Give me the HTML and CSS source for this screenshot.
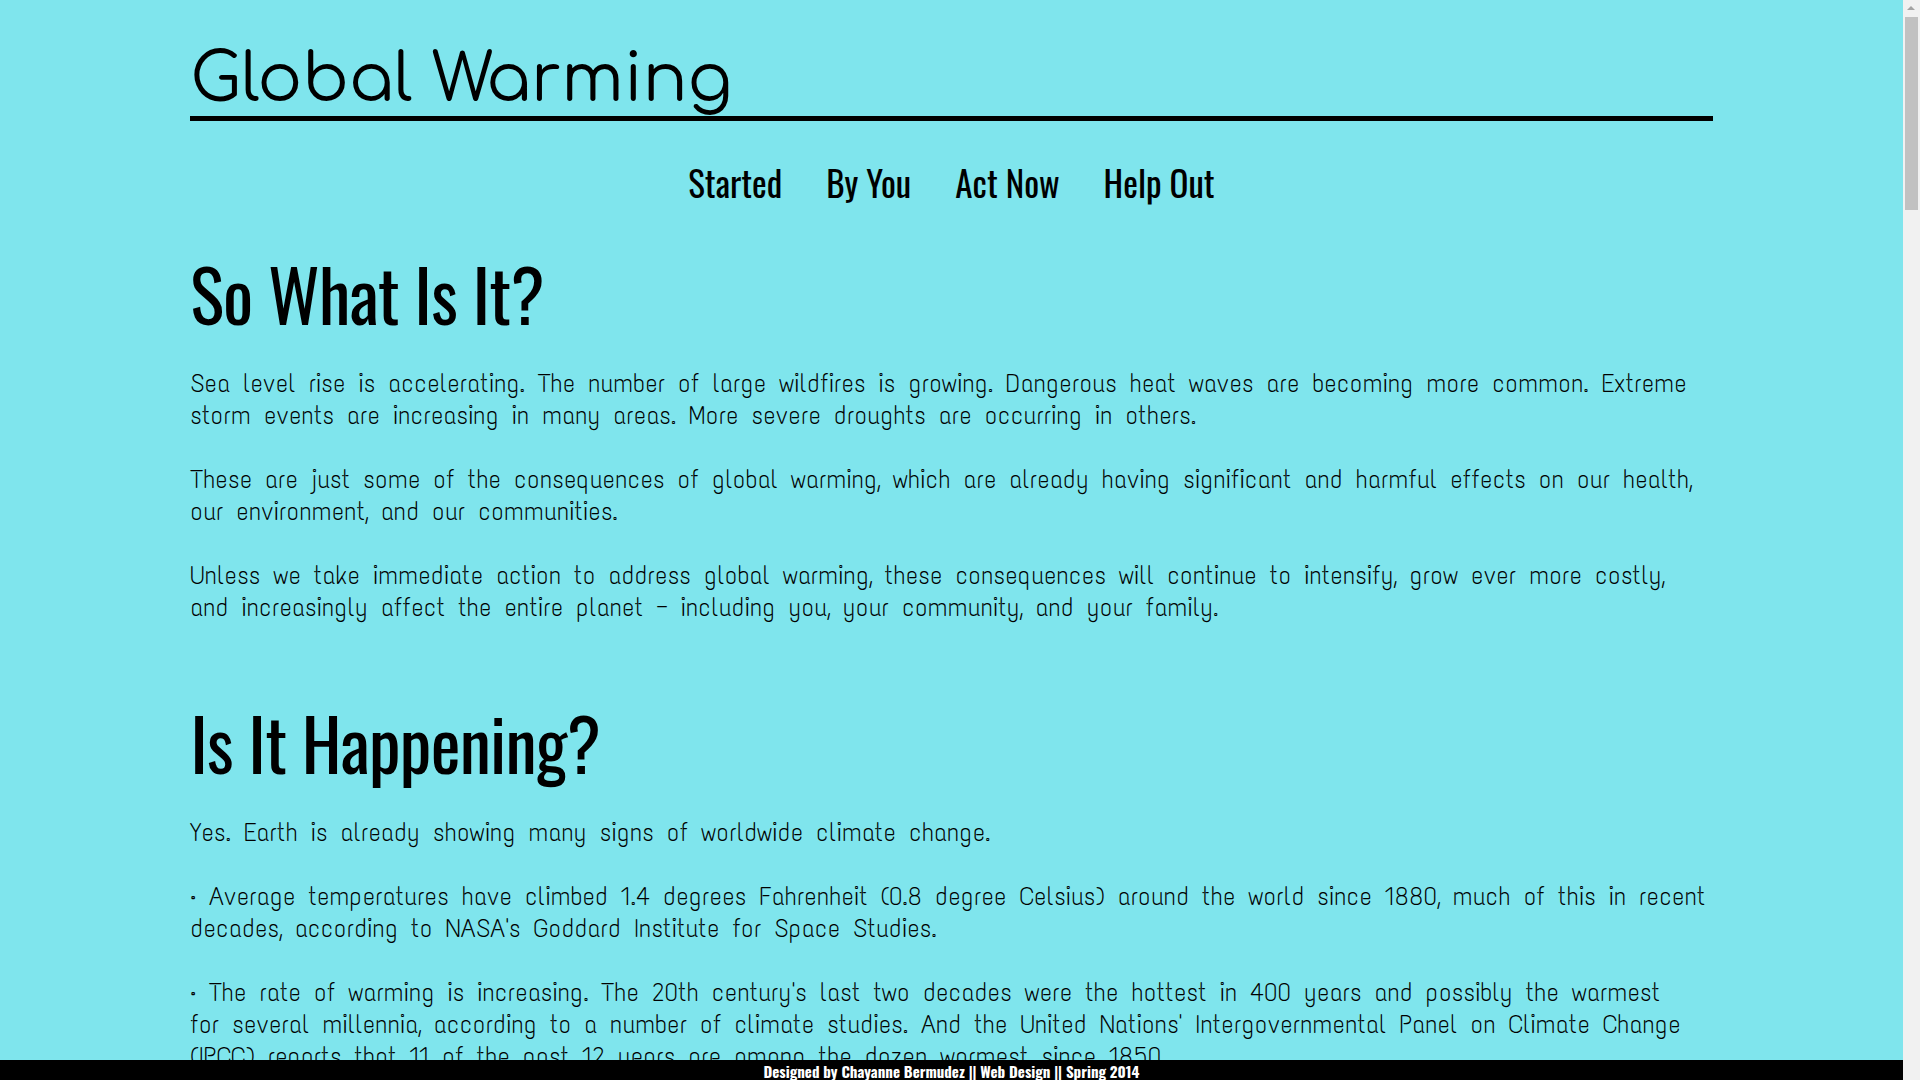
FILE: index.html
```html
<!DOCTYPE html>
<html lang="en">
<head>
<meta charset="utf-8">
<title>Global Warming</title>
<link rel="stylesheet" href="styles.css">
</head>
<body>
<div class="wrap">
  <header class="masthead">
    <h1 class="site-title">Global Warming</h1>
  </header>
  <nav class="menu">
    <a class="menu-link" href="#">Started</a>
    <a class="menu-link" href="#">By You</a>
    <a class="menu-link" href="#">Act Now</a>
    <a class="menu-link" href="#">Help Out</a>
  </nav>
  <main>
    <section class="topic">
      <h2 class="topic-title">So What Is It?</h2>
      <p class="copy">Sea level rise is accelerating. The number of large wildfires is growing. Dangerous heat waves are becoming more common. Extreme storm events are increasing in many areas. More severe droughts are occurring in others.</p>
      <p class="copy">These are just some of the consequences of global warming, which are already having significant and harmful effects on our health, our environment, and our communities.</p>
      <p class="copy">Unless we take immediate action to address global warming, these consequences will continue to intensify, grow ever more costly, and increasingly affect the entire planet — including you, your community, and your family.</p>
    </section>
    <section class="topic">
      <h2 class="topic-title">Is It Happening?</h2>
      <p class="copy">Yes. Earth is already showing many signs of worldwide climate change.</p>
      <p class="copy">· Average temperatures have climbed 1.4 degrees Fahrenheit (0.8 degree Celsius) around the world since 1880, much of this in recent decades, according to NASA's Goddard Institute for Space Studies.</p>
      <p class="copy">· The rate of warming is increasing. The 20th century's last two decades were the hottest in 400 years and possibly the warmest <span class="keep">for several</span> millennia, according to a number of climate studies. And the United Nations' Intergovernmental Panel on Climate Change (IPCC) reports that 11 of the past 12 years are among the dozen warmest since 1850.</p>
      <p class="copy">· The Arctic is feeling the effects the most. Average temperatures in Alaska, western Canada, and eastern Russia have risen at twice the global average, according to the multinational Arctic Climate Impact Assessment report.</p>
      <p class="copy">· Arctic ice is rapidly disappearing, and the region may have its first completely ice-free summer by 2040 or earlier.</p>
    </section>
  </main>
</div>
<footer class="credit">Designed by Chayanne Bermudez || Web Design || Spring 2014</footer>
<div class="scrollbar" aria-hidden="true">
  <span class="scrollbar-arrow"></span>
  <span class="scrollbar-thumb"></span>
</div>
</body>
</html>
```
FILE: styles.css
```css
html, body {
  margin: 0;
  padding: 0;
}

body {
  background: #7fe5ed;
  color: #000;
  font-family: "Text Me One", "Open Sans", sans-serif;
  padding-right: 17px;
}

.wrap {
  width: 80%;
  margin: 0 auto;
  padding-bottom: 80px;
}

.masthead {
  padding-top: 47px;
  padding-bottom: 3px;
  border-bottom: 5px solid #000;
}

.site-title {
  margin: 0;
  font-family: "Comfortaa", "Quicksand", sans-serif;
  font-weight: 400;
  font-size: 66px;
  line-height: 66px;
}

.menu {
  margin-top: 34px;
  display: flex;
  justify-content: center;
  gap: 44px;
}

.menu-link {
  font-family: "Oswald", "Open Sans", sans-serif;
  font-size: 35px;
  line-height: 54px;
  color: #000;
  text-decoration: none;
}

.topic {
  margin-top: 42px;
}

.topic + .topic {
  margin-top: 76px;
}

.topic-title {
  margin: 0 0 33px;
  font-family: "Oswald", "Open Sans", sans-serif;
  font-weight: 400;
  font-size: 71px;
  letter-spacing: -0.8px;
  line-height: 84px;
}

.copy {
  margin: 0;
  font-size: 25.7px;
  line-height: 32px;
}

.copy + .copy {
  margin-top: 32px;
}

.keep {
  white-space: nowrap;
}

.credit {
  position: fixed;
  left: 0;
  right: 17px;
  bottom: 0;
  height: 20px;
  overflow: hidden;
  background: #000;
  color: #fff;
  text-align: center;
  font-family: "Oswald", "Open Sans", sans-serif;
  font-weight: 700;
  font-size: 15px;
  line-height: 22px;
}

.scrollbar {
  position: fixed;
  top: 0;
  right: 0;
  bottom: 0;
  width: 17px;
  background: #f1f1f1;
}

.scrollbar-arrow {
  position: absolute;
  top: 6px;
  left: 4px;
  width: 0;
  height: 0;
  border-left: 4px solid transparent;
  border-right: 4px solid transparent;
  border-bottom: 4px solid #a3a3a3;
}

.scrollbar-thumb {
  position: absolute;
  top: 17px;
  left: 2px;
  width: 13px;
  height: 193px;
  background: #c1c1c1;
}
```
